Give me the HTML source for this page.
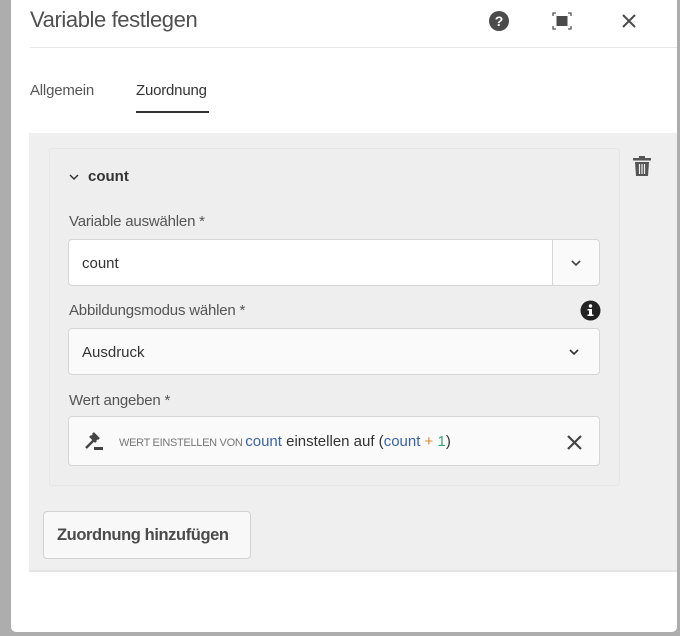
<!DOCTYPE html>
<html><head><meta charset="utf-8"><style>
*{box-sizing:border-box;margin:0;padding:0}
body{width:680px;height:636px;background:#adadad;font-family:"Liberation Sans",sans-serif;position:relative;overflow:hidden}
.dlg{position:absolute;left:11px;top:-4px;width:666px;height:636px;background:#fff;border-radius:5px}
.title{position:absolute;left:19px;top:11px;font-size:22px;color:#505050;letter-spacing:-0.4px}
.hr{position:absolute;left:19px;right:0;top:51px;border-top:1px solid #e8e8e8}
.tab{position:absolute;top:86px;font-size:15px;color:#555;letter-spacing:-0.2px}
.ul{position:absolute;left:125px;top:115px;width:73px;height:2px;background:#333}
.panel{position:absolute;left:18px;top:137px;width:648px;height:439px;background:#efefef;border-bottom:2px solid #e4e4e4}
.card{position:absolute;left:20px;top:15px;width:571px;height:338px;border:1px solid #e6e6e6;background:#eeeeee;border-radius:3px}
.lbl{position:absolute;left:19px;font-size:15px;color:#555;letter-spacing:-0.2px}
.inp{position:absolute;left:18px;width:532px;height:47px;border:1px solid #d6d6d6;border-radius:4px;background:#fafafa;font-size:15px;color:#333;padding:15px 13px;white-space:nowrap}
.btn{position:absolute;left:14px;top:378px;width:208px;height:48px;border:1px solid #d2d2d2;border-radius:4px;background:#f8f8f8;font-size:16.5px;font-weight:bold;color:#4b4b4b;padding:14px 13px;white-space:nowrap;letter-spacing:-0.4px}
</style></head><body>
<div class="dlg">
<div class="title">Variable festlegen</div>
<svg style="position:absolute;left:477px;top:14px" width="22" height="22" viewBox="0 0 22 22"><circle cx="11" cy="11" r="10" fill="#4b4b4b"/><text x="11" y="16" font-size="14" font-weight="bold" fill="#fff" text-anchor="middle" font-family="Liberation Sans">?</text></svg>
<svg style="position:absolute;left:540px;top:15px" width="22" height="20" viewBox="0 0 22 20"><path d="M2 5V2h3M17 2h3v3M20 15v3h-3M5 18H2v-3" stroke="#555" fill="none" stroke-width="1.3"/><rect x="5.5" y="5" width="11" height="10" fill="#4b4b4b"/></svg>
<svg style="position:absolute;left:610px;top:17px" width="16" height="16" viewBox="0 0 16 16"><path d="M2 2L14 14M14 2L2 14" stroke="#4b4b4b" stroke-width="2"/></svg>
<div class="hr"></div>
<div class="tab" style="left:19px">Allgemein</div>
<div class="tab" style="left:125px;color:#333">Zuordnung</div>
<div class="ul"></div>
<div class="panel">
<div class="card">
<svg style="position:absolute;left:19px;top:24px" width="10" height="8" viewBox="0 0 10 8"><path d="M1 2l4 4 4-4" stroke="#333" fill="none" stroke-width="1.5"/></svg>
<div style="position:absolute;left:38px;top:19px;font-size:15px;font-weight:bold;color:#333">count</div>
<div class="lbl" style="top:64px">Variable auswählen *</div>
<div class="inp" style="top:90px;background:#fff">count
<div style="position:absolute;right:0;top:0;width:47px;height:45px;border-left:1px solid #d6d6d6;background:#fafafa;border-radius:0 4px 4px 0"><svg style="position:absolute;left:18px;top:19px" width="10" height="8" viewBox="0 0 10 8"><path d="M1 2l4 4 4-4" stroke="#444" fill="none" stroke-width="1.6"/></svg></div></div>
<div class="lbl" style="top:153px">Abbildungsmodus wählen *</div>
<svg style="position:absolute;left:530px;top:151px" width="21" height="21" viewBox="0 0 21 21"><circle cx="10.5" cy="10.5" r="10" fill="#222"/><rect x="9" y="9" width="3" height="7" fill="#fff"/><rect x="7.5" y="9" width="4" height="1.5" fill="#fff"/><rect x="7.5" y="14.5" width="6" height="1.5" fill="#fff"/><circle cx="10.5" cy="6" r="1.7" fill="#fff"/></svg>
<div class="inp" style="top:179px">Ausdruck
<svg style="position:absolute;left:500px;top:19px" width="10" height="8" viewBox="0 0 10 8"><path d="M1 2l4 4 4-4" stroke="#333" fill="none" stroke-width="1.6"/></svg></div>
<div class="lbl" style="top:243px">Wert angeben *</div>
<div class="inp" style="top:267px;height:50px;padding:16px 13px 0 50px"><span style="font-size:11px;color:#777;letter-spacing:-0.3px">WERT EINSTELLEN VON </span><span style="color:#3a62a8">count</span> einstellen auf (<span style="color:#3a62a8">count</span><span style="color:#e08a2c"> + </span><span style="color:#3aa57a">1</span>)
<svg style="position:absolute;left:14px;top:14px" width="22" height="22" viewBox="0 0 22 22"><path d="M10 2l6 6M7 5l6 6M9 4l5 5" stroke="#444" stroke-width="2.5"/><path d="M11 9L3 17" stroke="#444" stroke-width="2.5"/><path d="M11 19h9v-3h-9z" fill="#444"/></svg>
<svg style="position:absolute;left:498px;top:18px" width="15" height="15" viewBox="0 0 15 15"><path d="M1 1L14 14M14 1L1 14" stroke="#444" stroke-width="2.2"/></svg></div>
</div>
<svg style="position:absolute;left:603px;top:22px" width="20" height="22" viewBox="0 0 20 22"><rect x="1" y="3" width="18" height="2.5" fill="#555"/><rect x="7" y="1" width="6" height="2.5" fill="#555"/><path d="M3 7h14l-1 14H4z" fill="#555"/><path d="M7.5 9v10M10 9v10M12.5 9v10" stroke="#efefef" stroke-width="1.2"/></svg>
<div class="btn">Zuordnung hinzufügen</div>
</div>
</div>
</body></html>
